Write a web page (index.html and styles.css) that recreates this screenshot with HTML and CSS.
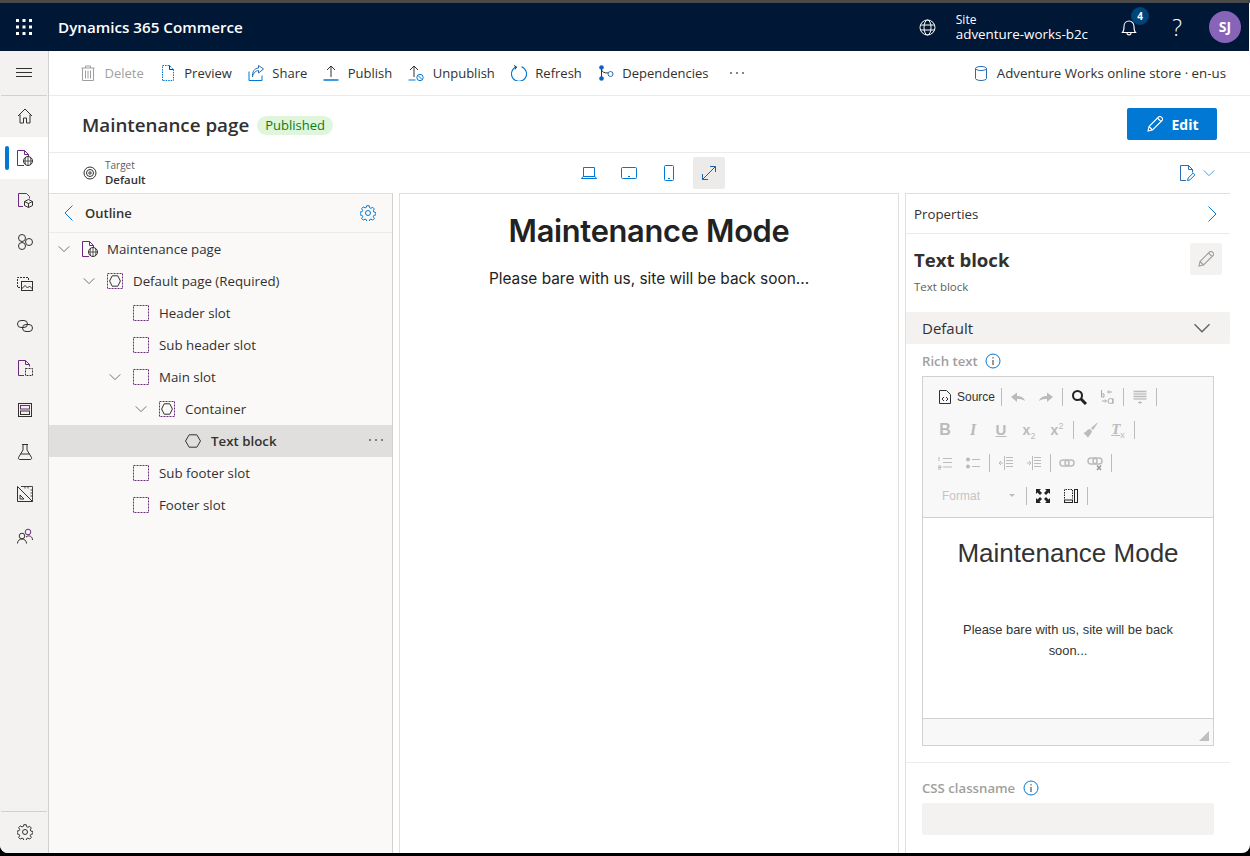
FILE: index.html
```html
<!DOCTYPE html>
<html lang="en">
<head>
  <meta charset="UTF-8" />
  <title>Dynamics 365 Commerce</title>
  <link rel="stylesheet" href="styles.css">
</head>
<body>
  <svg class="defs" width="0" height="0">
    <symbol id="chev" viewBox="0 0 16 16"><path d="M2 5l6 6 6-6" fill="none" stroke="currentColor"/></symbol>
    <symbol id="slot" viewBox="0 0 16 16"><rect x=".5" y=".5" width="15" height="15" fill="none" stroke="#6b2a7d" stroke-dasharray="2 1"/></symbol>
    <symbol id="slothex" viewBox="0 0 16 16"><rect x=".5" y=".5" width="15" height="15" fill="none" stroke="#6b2a7d" stroke-dasharray="2 1"/><path d="M5.200 2.800h5.600L13.400 8l-2.600 5.200H5.200L2.600 8z" fill="none" stroke="#323130"/></symbol>
    <symbol id="pageglobe" viewBox="0 0 16 16"><path d="M7 15.500H.5V.5h7l4 4v2M7.500.5v4h4" fill="none" stroke="#6b2a7d"/><circle cx="11" cy="11" r="4.500" fill="#fff" stroke="#323130"/><path d="M6.500 11h9M11 6.500v9M8.800 7c-1 2.500-1 5.500 0 8M13.200 7c1 2.500 1 5.500 0 8" fill="none" stroke="#323130" stroke-width=".8"/></symbol>
    <symbol id="gear" viewBox="0 0 16 16"><path d="M6.800.7h2.400l.4 2 1.300.6 1.800-1 1.600 1.700-1 1.800.6 1.300 2 .4v2.400l-2 .4-.6 1.300 1 1.800-1.600 1.700-1.800-1-1.300.6-.4 2H6.800l-.4-2-1.300-.6-1.800 1-1.600-1.700 1-1.800-.6-1.300-2-.4V7.100l2-.4.6-1.300-1-1.800 1.600-1.700 1.800 1 1.300-.6z" fill="none" stroke="currentColor"/><circle cx="8" cy="8" r="2.500" fill="none" stroke="currentColor"/></symbol>
    <symbol id="pencil" viewBox="0 0 16 16"><path d="M1 15l1-4.500L11.500 1c.8-.7 2-.7 2.800.1l.6.6c.8.8.8 2 .1 2.800L5.500 14zM2 10.500L5.500 14M10.500 2l3.500 3.500" fill="none" stroke="currentColor" stroke-width="1.100"/></symbol>
    <symbol id="info" viewBox="0 0 16 16"><circle cx="8" cy="8" r="7" fill="none" stroke="#0078d4"/><path d="M8 7v5M8 4.200v1.300" stroke="#323130" fill="none"/></symbol>
    <symbol id="dots" viewBox="0 0 16 4"><circle cx="2" cy="2" r="1"/><circle cx="8" cy="2" r="1"/><circle cx="14" cy="2" r="1"/></symbol>
  </svg>

  <div class="window">
    <header class="topbar">
      <svg class="waffle" width="16" height="16" viewBox="0 0 16 16" fill="#fff"><rect x="0" y="0" width="3" height="3"/><rect x="6.500" y="0" width="3" height="3"/><rect x="13" y="0" width="3" height="3"/><rect x="0" y="6.500" width="3" height="3"/><rect x="6.500" y="6.500" width="3" height="3"/><rect x="13" y="6.500" width="3" height="3"/><rect x="0" y="13" width="3" height="3"/><rect x="6.500" y="13" width="3" height="3"/><rect x="13" y="13" width="3" height="3"/></svg>
      <div class="brand">Dynamics 365 Commerce</div>
      <svg class="top-globe" width="17" height="17" viewBox="0 0 17 17" fill="none" stroke="#fff"><circle cx="8.500" cy="8.500" r="7.500"/><ellipse cx="8.500" cy="8.500" rx="3.500" ry="7.500"/><path d="M1.500 6h14M1.500 11h14"/></svg>
      <div class="site">
        <div class="site-label">Site</div>
        <div class="site-name">adventure-works-b2c</div>
      </div>
      <div class="bell">
        <svg width="16" height="17" viewBox="0 0 16 17" fill="none" stroke="#fff"><path d="M1.500 13.500c1.500-1.500 1.500-3 1.500-6C3 4.500 5 2 8 2s5 2.500 5 5.500c0 3 0 4.500 1.500 6zM6 14c0 2.500 4 2.500 4 0" stroke-width="1.100"/></svg>
        <span class="badge">4</span>
      </div>
      <div class="help">?</div>
      <div class="avatar">SJ</div>
    </header>

    <div class="main">
      <nav class="rail">
        <div class="rail-top">
          <svg width="16" height="10" viewBox="0 0 16 10" stroke="#323130"><path d="M0 .5h16M0 4.500h16M0 8.500h16"/></svg>
        </div>
        <div class="rail-items">
          <div class="rail-item"><svg width="16" height="16" viewBox="0 0 16 16" fill="none" stroke="#323130"><path d="M1 8l7-7 7 7M3 6.500V15h3.500v-5h3v5H13V6.500"/></svg></div>
          <div class="rail-item active"><svg width="16" height="16"><use href="#pageglobe"/></svg></div>
          <div class="rail-item"><svg width="16" height="16" viewBox="0 0 16 16" fill="none"><path d="M6 14.500H1.500V1.500h8l3 3v2" stroke="#6b2a7d"/><path d="M11.500 7.500l4 2v4l-4 2-4-2v-4zM7.500 9.500l4 2 4-2M11.500 11.500v4" fill="#f3f2f1" stroke="#323130"/></svg></div>
          <div class="rail-item"><svg width="16" height="16" viewBox="0 0 16 16" fill="none" stroke="#323130"><circle cx="5" cy="4" r="3.500"/><circle cx="5" cy="12" r="3.500"/><circle cx="12" cy="8" r="3.500"/></svg></div>
          <div class="rail-item"><svg width="16" height="16" viewBox="0 0 16 16" fill="none" stroke="#323130"><path d="M11.500 4V1.500H.5v10H4" stroke-dasharray="2 1"/><rect x="4.500" y="5.500" width="11" height="9"/><path d="M4.500 13l3.500-3.500 2.500 2.500 2-2 3 3"/></svg></div>
          <div class="rail-item"><svg width="16" height="16" viewBox="0 0 16 16" fill="none" stroke="#323130"><rect x=".5" y="2.500" width="10" height="7" rx="3.500"/><rect x="5.500" y="6.500" width="10" height="7" rx="3.500"/></svg></div>
          <div class="rail-item"><svg width="16" height="16" viewBox="0 0 16 16" fill="none"><path d="M7 15.500H1.500V.5h7l4 4v2M8.500.5v4h4" stroke="#6b2a7d"/><rect x="8.500" y="8.500" width="7" height="7" stroke="#323130" stroke-dasharray="2 1"/></svg></div>
          <div class="rail-item"><svg width="16" height="16" viewBox="0 0 16 16" fill="none" stroke="#323130"><rect x="1.500" y="1.500" width="13" height="13"/><rect x="3.500" y="3.500" width="9" height="3.500" stroke="#6b2a7d"/><rect x="3.500" y="9" width="9" height="3.500"/></svg></div>
          <div class="rail-item"><svg width="16" height="16" viewBox="0 0 16 16" fill="none" stroke="#323130"><path d="M5 .5h6M6 .5V6L1.500 13.500c-.5 1 .2 2 1.200 2h10.600c1 0 1.700-1 1.200-2L10 6V.5M3.500 10h9"/></svg></div>
          <div class="rail-item"><svg width="16" height="16" viewBox="0 0 16 16" fill="none" stroke="#323130"><path d="M.5.500l15 15H.5zM3 9l4 4H3z"/><path d="M4 .5h11.500v15M8 .5v2M11 .5v2M15.500 4h-2M15.500 7h-2M15.500 10h-2" stroke-width=".9"/></svg></div>
          <div class="rail-item"><svg width="16" height="16" viewBox="0 0 16 16" fill="none" stroke="#323130"><circle cx="11" cy="4" r="2.800" stroke="#6b2a7d"/><circle cx="5" cy="8" r="2.800"/><path d="M.5 15.500c0-6 9-6 9 0M9 9c3-2.500 6.500-.5 6.500 3"/></svg></div>
        </div>
        <div class="rail-bottom">
          <svg class="icon-dark" width="16" height="16"><use href="#gear"/></svg>
        </div>
      </nav>

      <div class="content">
        <div class="cmdbar">
          <div class="cmd disabled"><svg width="16" height="16" viewBox="0 0 16 16" fill="none" stroke="#a19f9d"><path d="M1.500 3h13M5.500 3V1h5v2M2.500 3v12.500h11V3M5.500 5.500v8M8 5.500v8M10.500 5.500v8"/></svg>Delete</div>
          <div class="cmd"><svg width="16" height="16" viewBox="0 0 16 16" fill="none" stroke="#0078d4"><path d="M2.500 15.500V.5h7l4 4v11z" stroke-dasharray="1.500 1"/><path d="M9.500.5v4h4" stroke="#323130"/></svg>Preview</div>
          <div class="cmd"><svg width="16" height="16" viewBox="0 0 16 16" fill="none" stroke="#0078d4"><path d="M1 6.500v9h13v-5"/><path d="M4.500 12c.5-4.500 4-6.500 6-6.500V8L15.500 4 10.500.5v2.500c-4 0-6.500 4-6 9z" stroke="#2b6cb0"/></svg>Share</div>
          <div class="cmd"><svg width="16" height="16" viewBox="0 0 16 16" fill="none"><path d="M8 12V1M4 5l4-4 4 4" stroke="#323130"/><path d="M.5 15h15" stroke="#0078d4" stroke-width="1.400"/></svg>Publish</div>
          <div class="cmd"><svg width="16" height="16" viewBox="0 0 16 16" fill="none" stroke="#0078d4"><path d="M6 12V1M2 5l4-4 4 4" stroke="#323130"/><path d="M.5 15h7"/><circle cx="12" cy="12.500" r="3.200"/><path d="M10 10.500l4 4"/></svg>Unpublish</div>
          <div class="cmd"><svg width="16" height="16" viewBox="0 0 16 16" fill="none" stroke="#0078d4"><path d="M5.500 1.800a7.500 7.500 0 1 0 5 0" stroke-width="1.100"/><path d="M3 .5l2.500 1.500L4 4.500" stroke="#323130"/></svg>Refresh</div>
          <div class="cmd"><svg width="16" height="16" viewBox="0 0 16 16" fill="none"><path d="M3.500 3v10M3.500 5c.5 2 3 3 6.500 3" stroke="#323130"/><circle cx="3.500" cy="2.500" r="2.300" fill="#0f5fc5"/><circle cx="3.500" cy="13.500" r="2.300" fill="#0f5fc5"/><circle cx="12.500" cy="9" r="2.500" fill="#fff" stroke="#2b6cb0"/></svg>Dependencies</div>
          <svg class="cmd-more" width="16" height="4"><use href="#dots"/></svg>
          <div class="store">
            <svg width="12" height="15" viewBox="0 0 12 15" fill="none" stroke="#2b6cb0"><ellipse cx="6" cy="2.500" rx="5.500" ry="2"/><path d="M.5 2.500v10c0 1 2.500 2 5.500 2s5.500-1 5.500-2v-10"/></svg>
            <span>Adventure Works online store &middot; en-us</span>
          </div>
        </div>

        <div class="titlebar">
          <h1 class="page-title">Maintenance page</h1>
          <span class="pill">Published</span>
          <button class="edit-btn"><svg width="16" height="16"><use href="#pencil"/></svg>Edit</button>
        </div>

        <div class="viewbar">
          <div class="target">
            <svg width="14" height="14" viewBox="0 0 14 14" fill="none" stroke="#323130"><circle cx="7" cy="7" r="6"/><circle cx="7" cy="7" r="3.500"/><circle cx="7" cy="7" r="1.200"/></svg>
            <div>
              <div class="target-label">Target</div>
              <div class="target-value">Default</div>
            </div>
          </div>
          <div class="devices">
            <div class="device"><svg width="16" height="14" viewBox="0 0 16 14" fill="none" stroke="#0078d4"><path d="M2.500 10.500V1.500h11v9M.5 12.500h15l-1.500-2H2z"/></svg></div>
            <div class="device"><svg width="16" height="14" viewBox="0 0 16 14" fill="none" stroke="#0078d4"><rect x=".5" y="1.500" width="15" height="11" rx="1"/><path d="M7 10.500h2"/></svg></div>
            <div class="device"><svg width="10" height="16" viewBox="0 0 10 16" fill="none" stroke="#0078d4"><rect x=".5" y=".5" width="9" height="15" rx="1"/><path d="M4 13.500h2"/></svg></div>
            <div class="device device-on"><svg width="16" height="16" viewBox="0 0 16 16" fill="none" stroke="#1f5fa8"><path d="M1.500 14.500l13-13M9 1.500h5.500V7M1.500 9v5.500H7"/></svg></div>
          </div>
          <div class="viewbar-right">
            <svg width="16" height="16" viewBox="0 0 16 16" fill="none" stroke="#0078d4"><path d="M7 15.500H1.500V.5h8l4 4v3M9.500.5v4h4" stroke="#2b6cb0"/><path d="M8.500 15.500l.7-2.500 5-5 1.800 1.800-5 5z"/></svg>
            <svg class="chev-blue" width="14" height="14"><use href="#chev"/></svg>
          </div>
        </div>

        <div class="panes">
          <aside class="outline">
            <div class="outline-head">
              <svg class="back" width="10" height="16" viewBox="0 0 10 16" fill="none" stroke="#0078d4"><path d="M8.500.5L1 8l7.500 7.500"/></svg>
              <span class="outline-title">Outline</span>
              <svg class="outline-gear" width="16" height="16"><use href="#gear"/></svg>
            </div>
            <div class="tree">
              <div class="row lv1"><svg class="chev" width="14" height="14"><use href="#chev"/></svg><svg class="node" width="16" height="16"><use href="#pageglobe"/></svg><span>Maintenance page</span></div>
              <div class="row lv2"><svg class="chev" width="14" height="14"><use href="#chev"/></svg><svg class="node" width="16" height="16"><use href="#slothex"/></svg><span>Default page (Required)</span></div>
              <div class="row lv3 leaf"><svg class="node" width="16" height="16"><use href="#slot"/></svg><span>Header slot</span></div>
              <div class="row lv3 leaf"><svg class="node" width="16" height="16"><use href="#slot"/></svg><span>Sub header slot</span></div>
              <div class="row lv3"><svg class="chev" width="14" height="14"><use href="#chev"/></svg><svg class="node" width="16" height="16"><use href="#slot"/></svg><span>Main slot</span></div>
              <div class="row lv4"><svg class="chev" width="14" height="14"><use href="#chev"/></svg><svg class="node" width="16" height="16"><use href="#slothex"/></svg><span>Container</span></div>
              <div class="row lv5 leaf selected"><svg class="node" width="16" height="16" viewBox="0 0 16 16" fill="none" stroke="#323130"><path d="M4.200 1.800h7.600L15.500 8l-3.700 6.200H4.200L.5 8z"/></svg><span>Text block</span><svg class="row-more" width="16" height="4"><use href="#dots"/></svg></div>
              <div class="row lv3 leaf"><svg class="node" width="16" height="16"><use href="#slot"/></svg><span>Sub footer slot</span></div>
              <div class="row lv3 leaf"><svg class="node" width="16" height="16"><use href="#slot"/></svg><span>Footer slot</span></div>
            </div>
          </aside>

          <section class="preview">
            <h2>Maintenance Mode</h2>
            <p>Please bare with us, site will be back soon...</p>
          </section>

          <aside class="props">
            <div class="props-head">
              <span>Properties</span>
              <svg width="10" height="16" viewBox="0 0 10 16" fill="none" stroke="#0078d4"><path d="M1.500.5L9 8l-7.500 7.500"/></svg>
            </div>
            <div class="props-title">
              <div>
                <div class="block-name">Text block</div>
                <div class="block-type">Text block</div>
              </div>
              <div class="pencil-btn"><svg width="16" height="16"><use href="#pencil"/></svg></div>
            </div>
            <div class="band">
              <span>Default</span>
              <svg class="band-chev" width="20" height="20"><use href="#chev"/></svg>
            </div>
            <div class="field-label rich-label">Rich text <svg width="16" height="16"><use href="#info"/></svg></div>
            <div class="editor">
              <div class="ck-toolbar">
                <div class="ck-row">
                  <div class="ck-source"><svg width="12" height="14" viewBox="0 0 12 14" fill="none" stroke="#333"><path d="M.5 13.500V.5h7l4 4v9z"/><path d="M5 7L3 9l2 2M7 7l2 2-2 2"/></svg>Source</div>
                  <i class="ck-sep"></i>
                  <div class="ck-btn"><svg width="16" height="16" viewBox="0 0 16 16" fill="#bbb"><path d="M1 8l6-4.500V7c4 0 7 1.500 8 5-2-1.500-4-2-8-2v3z"/></svg></div>
                  <div class="ck-btn"><svg width="16" height="16" viewBox="0 0 16 16" fill="#bbb"><path d="M15 8L9 3.500V7c-4 0-7 1.500-8 5 2-1.500 4-2 8-2v3z"/></svg></div>
                  <i class="ck-sep"></i>
                  <div class="ck-btn"><svg width="16" height="16" viewBox="0 0 16 16" fill="none" stroke="#222" stroke-width="2"><circle cx="6.500" cy="6.500" r="4.500"/><path d="M10 10l5 5" stroke-width="3"/></svg></div>
                  <div class="ck-btn"><svg width="16" height="16" viewBox="0 0 16 16" fill="none" stroke="#aaa"><path d="M2.500 1v7M2.500 5h2.500v3h-2.500M13 3H9M10 1.500L8.500 3 10 4.500M3 12h4M6 10.500L7.500 12 6 13.500"/><circle cx="11.500" cy="12" r="2.500"/><path d="M14 9v6"/></svg></div>
                  <i class="ck-sep"></i>
                  <div class="ck-btn"><svg width="16" height="16" viewBox="0 0 16 16" fill="none" stroke="#bbb"><rect x="1" y="1" width="14" height="10" fill="#e6e6e6" stroke="none"/><path d="M2 2.500h12M2 5h12M2 7.500h12M2 10h12M6 13.500h4M8 12v3"/></svg></div>
                  <i class="ck-sep"></i>
                </div>
                <div class="ck-row">
                  <div class="ck-btn ck-b">B</div>
                  <div class="ck-btn ck-i">I</div>
                  <div class="ck-btn ck-u"><u>U</u></div>
                  <div class="ck-btn ck-x"><span>x<sub>2</sub></span></div>
                  <div class="ck-btn ck-x"><span>x<sup>2</sup></span></div>
                  <i class="ck-sep"></i>
                  <div class="ck-btn"><svg width="16" height="16" viewBox="0 0 16 16" fill="#bbb"><path d="M15.500.5L9 6l2 2L15.500 1.500zM8 7l-2 .5c-1 .5-1 2-4.500 3.500L6 15.500c2-3 3-3.500 3.500-5l.5-1.500z"/></svg></div>
                  <div class="ck-btn ck-clear"><span><u>T</u><sub>x</sub></span></div>
                  <i class="ck-sep"></i>
                </div>
                <div class="ck-row">
                  <div class="ck-btn"><svg width="16" height="16" viewBox="0 0 16 16" fill="none" stroke="#bbb"><path d="M6 3.500h9M6 7.500h9M6 12h9M2 2v4M1 14h3M1 11h3v1.500H1"/></svg></div>
                  <div class="ck-btn"><svg width="16" height="16" viewBox="0 0 16 16" fill="none" stroke="#bbb"><path d="M7 4.500h8M7 11.500h8"/><circle cx="3" cy="4.500" r="2" fill="#bbb" stroke="none"/><circle cx="3" cy="11.500" r="2" fill="#bbb" stroke="none"/></svg></div>
                  <i class="ck-sep"></i>
                  <div class="ck-btn"><svg width="16" height="16" viewBox="0 0 16 16" fill="none" stroke="#bbb"><path d="M8 2.500h7M8 5.500h7M8 8.500h7M8 11.500h7M6.500 1v14"/><path d="M5 8H1M3 6L1 8l2 2"/></svg></div>
                  <div class="ck-btn"><svg width="16" height="16" viewBox="0 0 16 16" fill="none" stroke="#bbb"><path d="M8 2.500h7M8 5.500h7M8 8.500h7M8 11.500h7M6.500 1v14"/><path d="M1 8h4M3 6l2 2-2 2"/></svg></div>
                  <i class="ck-sep"></i>
                  <div class="ck-btn"><svg width="16" height="16" viewBox="0 0 16 16" fill="none" stroke="#bbb" stroke-width="1.500"><rect x="1" y="5" width="9" height="6" rx="3"/><rect x="6" y="5" width="9" height="6" rx="3"/></svg></div>
                  <div class="ck-btn"><svg width="16" height="16" viewBox="0 0 16 16" fill="none" stroke="#bbb" stroke-width="1.500"><rect x="1" y="3" width="9" height="6" rx="3"/><rect x="6" y="3" width="9" height="6" rx="3"/><path d="M10 10.500l4 4.500M14 10.500l-4 4.500" stroke="#999"/></svg></div>
                  <i class="ck-sep"></i>
                </div>
                <div class="ck-row">
                  <div class="ck-combo"><span>Format</span><b></b></div>
                  <i class="ck-sep"></i>
                  <div class="ck-btn"><svg width="16" height="16" viewBox="0 0 16 16" fill="#222"><path d="M1 1h5L4.500 2.500 7 5 5 7 2.500 4.500 1 6zM15 1v5l-1.500-1.500L11 7 9 5l2.500-2.500L10 1zM1 15v-5l1.500 1.500L5 9l2 2-2.500 2.500L6 15zM15 15h-5l1.500-1.500L9 11l2-2 2.500 2.500L15 10z"/></svg></div>
                  <div class="ck-btn"><svg width="16" height="16" viewBox="0 0 16 16" fill="none" stroke="#222"><path d="M1.500 10.500v-9h8v9" stroke-dasharray="1.500 1"/><rect x="1.500" y="12" width="8" height="2.500"/><rect x="11.500" y="1.500" width="3" height="13"/></svg></div>
                  <i class="ck-sep"></i>
                </div>
              </div>
              <div class="ck-body">
                <div class="ck-h1">Maintenance Mode</div>
                <p>Please bare with us, site will be back soon...</p>
              </div>
              <div class="ck-foot"><b class="resize"></b></div>
            </div>
            <div class="props-rule"></div>
            <div class="field-label css-label">CSS classname <svg width="16" height="16"><use href="#info"/></svg></div>
            <div class="css-input"></div>
          </aside>
        </div>
      </div>
    </div>
  </div>
</body>
</html>
```

FILE: styles.css
```css
html, body {
  margin: 0;
  height: 100%;
  background: #000;
  overflow: hidden;
}

body {
  font-family: "Open Sans", "Noto Sans", sans-serif;
  font-size: 14px;
  color: #323130;
}

svg { display: block; flex: none; }
.defs { position: absolute; }

.window {
  height: 853px;
  display: flex;
  flex-direction: column;
  background: #fff;
  border-radius: 0 0 8px 8px;
  overflow: hidden;
  border-top: 3px solid #4a4a4a;
  box-sizing: border-box;
}

/* top bar */
.topbar {
  height: 48px;
  flex: none;
  background: #001736;
  color: #fff;
  display: flex;
  align-items: center;
  padding: 0 8px 0 16px;
  margin-right: 1px;
}
.brand { margin-left: 26px; font-size: 15.200px; font-weight: 600; flex: 1; }
.top-globe { margin-right: 20px; }
.site { line-height: 14px; }
.site-label { font-size: 12px; }
.site-name { font-size: 13.400px; }
.bell { position: relative; margin-left: 33px; }
.badge {
  position: absolute;
  top: -12px;
  left: 10px;
  width: 18px;
  height: 18px;
  border-radius: 50%;
  background: #004578;
  font-size: 10px;
  font-weight: 700;
  line-height: 18px;
  text-align: center;
}
.help { margin-left: 32px; width: 16px; text-align: center; font-size: 23px; line-height: 1; font-weight: 300; }
.avatar {
  margin-left: 24px;
  width: 32px;
  height: 32px;
  border-radius: 50%;
  background: #8764b8;
  font-size: 14px;
  font-weight: 700;
  line-height: 32px;
  text-align: center;
}

.main { flex: 1; display: flex; min-height: 0; }

/* left rail */
.rail {
  width: 48px;
  flex: none;
  background: #f3f2f1;
  border-right: 1px solid #d2d0ce;
  display: flex;
  flex-direction: column;
}
.rail-top {
  height: 44px;
  margin: 0 1px -1px;
  border-bottom: 1px solid #d2d0ce;
  display: flex;
  align-items: center;
  justify-content: center;
  flex: none;
}
.rail-items { flex: 1; }
.rail-item {
  height: 42px;
  padding-left: 2px;
  box-sizing: border-box;
  display: flex;
  align-items: center;
  justify-content: center;
  position: relative;
}
.rail-item.active { background: #fff; }
.rail-item.active::before {
  content: "";
  position: absolute;
  left: 5px;
  top: 9px;
  width: 4px;
  height: 24px;
  border-radius: 2px;
  background: #0078d4;
}
.rail-bottom {
  height: 40px;
  padding: 0 0 1px 2px;
  margin: 0 1px;
  border-top: 1px solid #d2d0ce;
  display: flex;
  align-items: center;
  justify-content: center;
  flex: none;
}
.icon-dark { color: #323130; }

.content { flex: 1; min-width: 0; display: flex; flex-direction: column; }

/* command bar */
.cmdbar {
  height: 44px;
  flex: none;
  border-bottom: 1px solid #edebe9;
  display: flex;
  align-items: center;
  padding: 0 24px 0 31px;
  gap: 16px;
  font-size: 13px;
}
.cmd { display: flex; align-items: center; gap: 8.500px; }
.cmd.disabled { color: #a19f9d; }
.cmd-more { margin-left: 4px; fill: #605e5c; }
.store { margin-left: auto; display: flex; align-items: center; gap: 10px; font-size: 13.300px; }

/* title row */
.titlebar {
  height: 57px;
  flex: none;
  border-bottom: 1px solid #edebe9;
  display: flex;
  align-items: center;
  padding: 0 33px;
  box-sizing: border-box;
}
.page-title { margin: 2px 0 0; font-size: 18.800px; font-weight: 600; }
.pill {
  margin: 3px 0 0 8px;
  padding: 0 8px;
  height: 19px;
  line-height: 19px;
  border-radius: 10px;
  background: #dff6dd;
  color: #107c10;
  font-size: 13px;
}
.edit-btn {
  margin-left: auto;
  width: 90px;
  height: 32px;
  padding: 0 0 0 2px;
  border: 0;
  border-radius: 2px;
  background: #0078d4;
  color: #fff;
  font: 700 14px "Open Sans", sans-serif;
  display: flex;
  align-items: center;
  justify-content: center;
  gap: 8px;
}

/* view row */
.viewbar {
  height: 40px;
  flex: none;
  display: flex;
  align-items: center;
}
.target {
  width: 520px;
  box-sizing: border-box;
  padding-left: 34px;
  display: flex;
  align-items: center;
  gap: 8px;
  flex: none;
}
.target-label { font-size: 10px; line-height: 13px; color: #605e5c; }
.target-value { font-size: 11.400px; line-height: 15px; font-weight: 600; }
.devices { display: flex; align-items: center; width: 156px; flex: none; }
.device { width: 40px; height: 32px; display: flex; align-items: center; justify-content: center; }
.device-on { width: 32px; margin-left: 4px; background: #edebe9; border-radius: 2px; }
.viewbar-right { margin-left: auto; padding-right: 34px; display: flex; align-items: center; gap: 7px; }
.chev-blue { color: #0078d4; opacity: .8; }

/* panes */
.panes { flex: 1; display: flex; min-height: 0; }

.outline {
  width: 343px;
  flex: none;
  background: #faf9f8;
  border-top: 1px solid #e1dfdd;
  border-right: 1px solid #d2d0ce;
}
.outline-head {
  height: 38px;
  border-bottom: 1px solid #edebe9;
  display: flex;
  align-items: center;
  padding: 0 16px 0 15px;
}
.outline-title { margin-left: 11px; font-weight: 600; font-size: 13px; flex: 1; }
.outline-gear { color: #0078d4; }

.row { height: 32px; display: flex; align-items: center; font-size: 13.300px; position: relative; }
.row .chev { color: #605e5c; margin-right: 11px; }
.row .node { margin-right: 10px; }
.lv1 .node { margin-right: 9px; }
.lv1 { padding-left: 8px; }
.lv2 { padding-left: 33px; }
.lv3 { padding-left: 59px; }
.lv4 { padding-left: 85px; }
.lv5 { padding-left: 111px; }
.leaf.lv3 { padding-left: 84px; }
.leaf.lv5 { padding-left: 136px; }
.selected { background: #e1dfdd; font-weight: 600; }
.row-more {
  position: absolute;
  right: 8px;
  top: 13px;
  fill: #605e5c;
}

.preview {
  width: 498px;
  flex: none;
  margin-left: 6px;
  border: 1px solid #e1dfdd;
  border-bottom: 0;
  text-align: center;
}
.preview h2 {
  margin: 17px 0 0;
  font: 600 30.800px/40px Inter, sans-serif;
  color: #222;
  letter-spacing: -.3px;
}
.preview p {
  margin: 16px 0 0;
  font: 400 15.400px/24px Inter, sans-serif;
  color: #222;
}

.props {
  width: 325px;
  flex: none;
  margin-left: 6px;
  border-top: 1px solid #e1dfdd;
  border-left: 1px solid #e1dfdd;
  box-sizing: border-box;
}
.props-head {
  height: 39px;
  border-bottom: 1px solid #edebe9;
  display: flex;
  align-items: center;
  justify-content: space-between;
  padding: 0 13px 0 8px;
  font-weight: 500;
  font-size: 13.300px;
}
.props-title {
  display: flex;
  justify-content: space-between;
  padding: 9px 8px 0 8px;
  height: 69px;
  box-sizing: border-box;
}
.block-name { font-size: 18.600px; line-height: 34px; font-weight: 700; }
.block-type { font-size: 11.500px; line-height: 16px; color: #605e5c; margin-top: 2px; }
.pencil-btn {
  width: 32px;
  height: 32px;
  background: #f3f2f1;
  border-radius: 2px;
  display: flex;
  align-items: center;
  justify-content: center;
  color: #a19f9d;
}
.band {
  height: 32px;
  background: #f3f2f1;
  border-radius: 2px;
  display: flex;
  align-items: center;
  justify-content: space-between;
  padding: 0 18px 0 16px;
  font-size: 15px;
  margin-top: 9px;
}
.band-chev { color: #605e5c; }
.field-label {
  display: flex;
  align-items: center;
  gap: 7px;
  padding-left: 16px;
  font-size: 13.200px;
  font-weight: 600;
  color: #a19f9d;
}
.rich-label { height: 32px; padding-top: 1px; box-sizing: border-box; }
.css-label { height: 24px; margin-top: 13px; gap: 8px; }

.editor { margin: 0 16px; border: 1px solid #d1d1d1; width: 292px; box-sizing: border-box; height: 370px; display: flex; flex-direction: column; }
.ck-toolbar {
  height: 141px;
  flex: none;
  padding: 3px 0 0 8px;
  background: #f8f8f8;
  border-bottom: 1px solid #d1d1d1;
  box-sizing: border-box;
  font-family: "Liberation Sans", sans-serif;
}
.ck-row { height: 33px; display: flex; align-items: center; }
.ck-btn {
  width: 28px;
  height: 24px;
  display: flex;
  align-items: center;
  justify-content: center;
  flex: none;
  color: #bbb;
}
.ck-sep { width: 1px; height: 18px; margin: 0 2px; background: #bcbcbc; flex: none; }
.ck-source { width: 68px; flex: none; display: flex; align-items: center; gap: 6px; padding-left: 8px; box-sizing: border-box; font-size: 12px; color: #333; }
.ck-btn sub, .ck-btn sup { font-size: 9px; line-height: 0; font-weight: 400; font-style: normal; font-family: "Liberation Sans", sans-serif; }
.ck-b { font: 700 16px "Liberation Sans", sans-serif; }
.ck-i { font: italic 700 16px "Liberation Serif", serif; }
.ck-u { font: 700 15px "Liberation Sans", sans-serif; }
.ck-x { font: 700 14px "Liberation Sans", sans-serif; }
.ck-clear { font: italic 700 15px "Liberation Serif", serif; }
.ck-combo { width: 93px; flex: none; display: flex; align-items: center; justify-content: space-between; padding: 0 9px 0 11px; box-sizing: border-box; color: #c4c4c4; font-size: 12px; }
.ck-combo b { border: 3px solid transparent; border-top-color: #bbb; margin-top: 3px; }
.ck-body { flex: 1; min-height: 0; text-align: center; font-family: "Liberation Sans", sans-serif; color: #333; padding: 21px 20px 0; }
.ck-h1 { font-size: 26px; line-height: 28px; }
.ck-body p { margin: 52px 0 0; font-size: 12.900px; line-height: 21px; }
.ck-foot { height: 26px; flex: none; background: #f8f8f8; border-top: 1px solid #d1d1d1; position: relative; }
.resize {
  position: absolute;
  right: 4px;
  bottom: 4px;
  border: 5px solid transparent;
  border-right-color: #bfbfbf;
  border-bottom-color: #bfbfbf;
}
.props-rule { height: 1px; background: #edebe9; margin-top: 16px; }
.css-input { margin: 3px 16px 0; height: 32px; width: 292px; border-radius: 2px; background: #f3f2f1; }
```
